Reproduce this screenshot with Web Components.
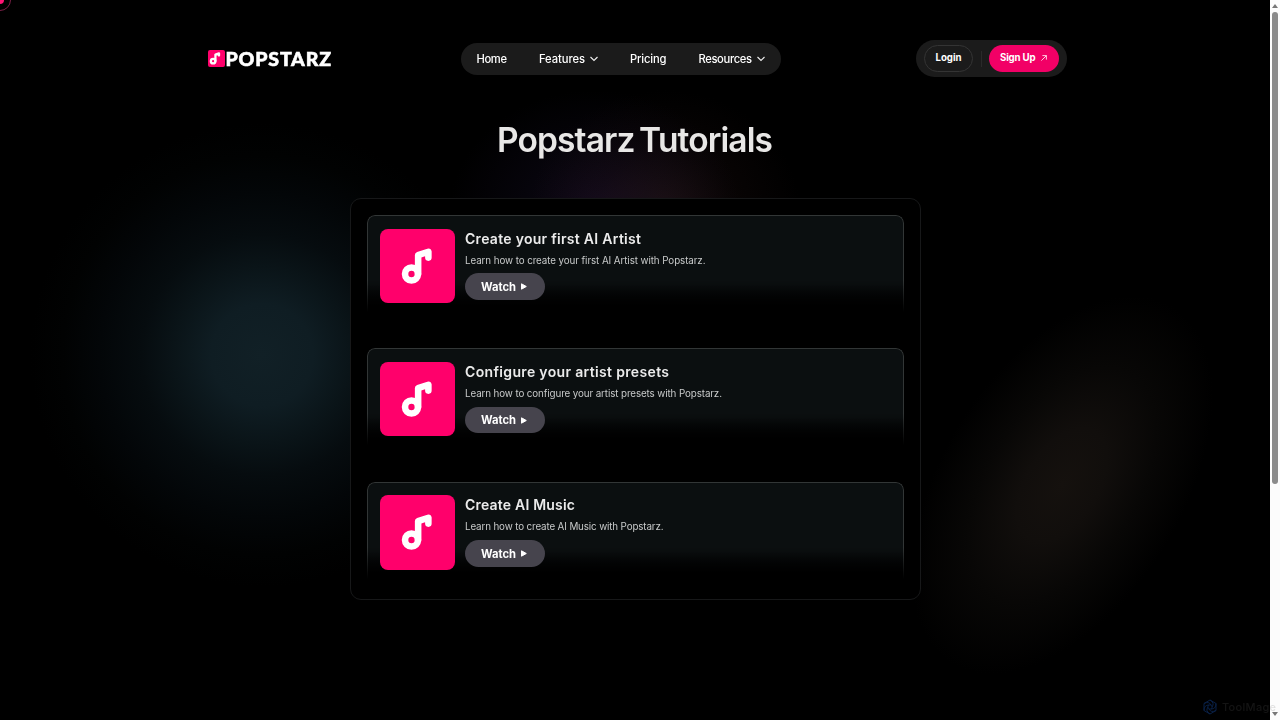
<!DOCTYPE html>
<html lang="en">
<head>
<meta charset="UTF-8">
<title>Popstarz Tutorials</title>
<style>
    :root {
        --pink: #ff006b;
        --pill: #1b1b1b;
    }
    * { box-sizing: border-box; }
    html, body { margin: 0; height: 100%; overflow: hidden; background: #000; }
    body { font-family: Inter, "Liberation Sans", sans-serif; color: #fff; }
</style>
</head>
<body>
<popstarz-page></popstarz-page>

<script>
// Text label that spreads its letters over a given width
class FitText extends HTMLElement {
    constructor() {
        super();
        this.attachShadow({ mode: 'open' });
        this.shadowRoot.innerHTML = `
            <style>
                :host { display: block; white-space: nowrap; flex: none; }
                span { display: inline-block; }
            </style>
            <span><slot></slot></span>
        `;
    }

    connectedCallback() {
        const width = parseFloat(this.getAttribute('width'));
        const label = this.shadowRoot.querySelector('span');
        this.style.width = width + 'px';
        const natural = label.getBoundingClientRect().width;
        const count = this.textContent.length;
        if (natural > 0) {
            label.style.letterSpacing = (width - natural) / (count - 1) + 'px';
        }
    }
}

class NoteIcon extends HTMLElement {
    constructor() {
        super();
        this.attachShadow({ mode: 'open' });
        this.shadowRoot.innerHTML = `
            <style>
                :host { display: block; flex: none; background: var(--pink); overflow: hidden; }
                svg { display: block; width: 100%; height: 100%; }
            </style>
            <svg viewBox="${this.getAttribute('box') || '0 0 75 75'}" fill="none" stroke="#fff" stroke-width="6.6" stroke-linecap="round" stroke-linejoin="round">
                <circle cx="31.7" cy="45.3" r="6.5"/>
                <path d="M38.4 45V26.3L48.7 22.9V28.8"/>
            </svg>
        `;
    }
}

class SiteNav extends HTMLElement {
    constructor() {
        super();
        this.attachShadow({ mode: 'open' });
        const chevron = '<svg width="8" height="6" viewBox="0 0 8 6" fill="none" stroke="#f0f0f0" stroke-width="1.1"><path d="M.5 1L4 4.5L7.5 1"/></svg>';
        this.shadowRoot.innerHTML = `
            <style>
                :host {
                    display: flex;
                    align-items: center;
                    gap: 32px;
                    width: 320px;
                    height: 32px;
                    padding: 0 16px 0 16px;
                    border-radius: 16px;
                    background: var(--pill);
                    font-size: 11.2px;
                    font-weight: 550;
                    line-height: 16px;
                }
                a { display: flex; align-items: center; gap: 5px; }
            </style>
            <a><fit-text width="30.5">Home</fit-text></a>
            <a><fit-text width="46">Features</fit-text>${chevron}</a>
            <a><fit-text width="36.5">Pricing</fit-text></a>
            <a><fit-text width="53.5">Resources</fit-text>${chevron}</a>
        `;
    }
}

class AccountActions extends HTMLElement {
    constructor() {
        super();
        this.attachShadow({ mode: 'open' });
        this.shadowRoot.innerHTML = `
            <style>
                * { box-sizing: border-box; }
                :host {
                    display: flex;
                    align-items: center;
                    gap: 7.5px;
                    width: 151px;
                    height: 37px;
                    padding: 0 8px;
                    box-sizing: border-box;
                    border-radius: 19px;
                    background: var(--pill);
                    font-size: 9.7px;
                    font-weight: 650;
                    line-height: 14px;
                }
                .login, .signup {
                    display: flex;
                    align-items: center;
                    justify-content: center;
                    height: 27px;
                    padding-bottom: 1px;
                    border-radius: 14px;
                }
                .login { width: 49px; border: 1px solid #343434; }
                .signup { width: 70px; gap: 5.5px; padding-right: 1px; background: #f20066; }
                i { width: 1px; height: 16px; background: #2a2a2a; }
            </style>
            <div class="login"><fit-text width="26">Login</fit-text></div>
            <i></i>
            <div class="signup">
                <fit-text width="35.5">Sign Up</fit-text>
                <svg width="6" height="6" viewBox="0 0 6 6" fill="none" stroke="#fff" stroke-width=".8"><path d="M.4 5.6L5.4 .6M1.4 .6H5.4V4.6"/></svg>
            </div>
        `;
    }
}

class SiteHeader extends HTMLElement {
    constructor() {
        super();
        this.attachShadow({ mode: 'open' });
        this.shadowRoot.innerHTML = `
            <style>
                :host { display: flex; align-items: center; height: 37px; }
                .logo {
                    display: flex;
                    align-items: center;
                    gap: .5px;
                    width: 124px;
                    font-family: Lato, sans-serif;
                    font-size: 19.5px;
                    font-weight: 900;
                    line-height: 20px;
                    -webkit-text-stroke: .6px #fff;
                }
                note-icon { width: 17px; height: 17px; border-radius: 2px; }
                site-nav { box-sizing: border-box; margin: 0 135.5px 0 128.5px; }
            </style>
            <div class="logo"><note-icon box="17 13 49 49"></note-icon><fit-text width="105.5">POPSTARZ</fit-text></div>
            <site-nav></site-nav>
            <account-actions></account-actions>
        `;
    }
}

class TutorialCard extends HTMLElement {
    constructor() {
        super();
        this.attachShadow({ mode: 'open' });
        this.shadowRoot.innerHTML = `
            <style>
                * { box-sizing: border-box; }
                :host {
                    display: flex;
                    flex: none;
                    position: relative;
                    box-sizing: border-box;
                    gap: 10.5px;
                    height: 107px;
                    padding: 13.5px;
                }
                /* frame and fill dissolve towards the bottom edge */
                .frame {
                    position: absolute;
                    inset: 0 0 8px;
                    border: 1px solid #323636;
                    border-bottom: 0;
                    border-radius: 8px 8px 0 0;
                    background: linear-gradient(#0b0f10 70%, #000 94%);
                    mask-image: linear-gradient(#000 66%, transparent 98%);
                }
                note-icon { position: relative; width: 74.5px; height: 74.5px; border-radius: 8px; }
                .info { position: relative; display: flex; flex-direction: column; align-items: flex-start; }
                .title { font-size: 14px; font-weight: 600; line-height: 20px; color: #ebebeb; }
                .text { margin-top: 4.2px; font-size: 9.8px; line-height: 16px; color: #c8caca; }
                .watch {
                    display: flex;
                    align-items: center;
                    gap: 5px;
                    width: 80px;
                    height: 26.5px;
                    margin-top: 4.8px;
                    padding-left: 16px;
                    border-radius: 14px;
                    background: #46444d;
                    font-size: 11.2px;
                    font-weight: 700;
                    line-height: 16px;
                }
            </style>
            <div class="frame"></div>
            <note-icon></note-icon>
            <div class="info">
                <div class="title"><slot name="title"></slot></div>
                <div class="text"><slot></slot></div>
                <div class="watch">
                    <fit-text width="35">Watch</fit-text>
                    <svg width="6" height="7" viewBox="0 0 6 7" fill="#fff" stroke="#fff" stroke-linejoin="round"><path d="M.5 .8V6.2L5.3 3.5Z"/></svg>
                </div>
            </div>
        `;
    }
}

class GlowBackdrop extends HTMLElement {
    constructor() {
        super();
        this.attachShadow({ mode: 'open' });
        this.shadowRoot.innerHTML = `
            <style>
                :host { position: absolute; inset: 0; overflow: hidden; }
                div { position: absolute; }
                .blue {
                    left: 30px; top: 123px; width: 464px; height: 464px;
                    background: radial-gradient(closest-side, #112026 0%, #0f1d23 22%, #0a1418 38%, #060c0f 52%, #030608 70%, #010202 86%, #000 100%);
                }
                .violet {
                    left: 450px; top: 90px; width: 290px; height: 240px;
                    background: radial-gradient(closest-side, #0e0818, #06040b 50%, transparent);
                }
                .rose {
                    left: 530px; top: 90px; width: 270px; height: 240px;
                    background: radial-gradient(closest-side, #150c0a, #080404 50%, transparent);
                    mix-blend-mode: screen;
                }
                .amber {
                    left: 942px; top: 275px; width: 240px; height: 420px;
                    transform: rotate(32deg);
                    background: radial-gradient(closest-side, #15110e 0%, #110e0c 30%, #080706 62%, transparent 100%);
                }
                .dot { left: -4px; top: -4px; width: 8px; height: 8px; border-radius: 50%; background: #ff1474; }
                .ring { left: -11px; top: -11px; width: 22px; height: 22px; box-sizing: border-box; border: 1px solid #7a1f46; border-radius: 50%; }
            </style>
            <div class="blue"></div><div class="violet"></div><div class="rose"></div>
            <div class="amber"></div><div class="dot"></div><div class="ring"></div>
        `;
    }
}

class PageScrollbar extends HTMLElement {
    constructor() {
        super();
        this.attachShadow({ mode: 'open' });
        this.shadowRoot.innerHTML = `
            <style>
                :host { display: flex; flex-direction: column; align-items: center; justify-content: space-between; width: 10px; height: 720px; padding: 4px 0; box-sizing: border-box; background: #fcfcfc; }
                .thumb { width: 6px; height: 472px; margin: 4px 0 auto; border-radius: 3px; background: #8b8b8b; }
                svg { display: block; }
            </style>
            <svg width="6" height="4" fill="#777"><path d="M0 4L3 0L6 4Z"/></svg>
            <div class="thumb"></div>
            <svg width="6" height="4" fill="#777"><path d="M0 0L3 4L6 0Z"/></svg>
        `;
    }
}

class ToolMark extends HTMLElement {
    constructor() {
        super();
        this.attachShadow({ mode: 'open' });
        this.shadowRoot.innerHTML = `
            <style>
                :host { position: absolute; right: 4px; bottom: 5px; display: flex; align-items: center; gap: 4px; font-size: 11px; font-weight: 500; line-height: 16px; color: rgba(105,105,105,.19); }
            </style>
            <svg width="16" height="16" viewBox="-8 -8 16 16" fill="none" stroke="#092047" stroke-width="1">
                <path d="M0-7L6-3.5V3.5L0 7L-6 3.5V-3.5Z"/>
                <circle r="2.2"/>
                <path d="M0-7Q5-4 2 0M6-3.5Q6 2 1 2M6 3.5Q1 6-1 2M0 7Q-5 4-2 0M-6 3.5Q-6-2-1-2M-6-3.5Q-1-6 1-2"/>
            </svg>
            <fit-text width="54">ToolMage</fit-text>
        `;
    }
}

class PopstarzPage extends HTMLElement {
    constructor() {
        super();
        this.attachShadow({ mode: 'open' });
        this.shadowRoot.innerHTML = `
            <style>
                * { box-sizing: border-box; }
                :host { display: flex; position: relative; width: 1280px; height: 720px; overflow: hidden; }
                main { position: relative; display: flex; flex-direction: column; width: 1270px; padding-top: 40px; }
                site-header { margin-left: 208px; }
                h1 { margin: 42px 0 0 497px; font-size: 33.5px; font-weight: 600; line-height: 42px; word-spacing: -3px; color: #e8e7e6; }
                .panel {
                    display: flex;
                    flex-direction: column;
                    gap: 26.4px;
                    width: 571px;
                    height: 402px;
                    margin: 37px 0 0 350px;
                    padding: 16px 16px 16px 15.5px;
                    border: 1px solid #171819;
                    border-radius: 11px;
                    background: #000;
                }
            </style>
            <glow-backdrop></glow-backdrop>
            <main>
                <site-header></site-header>
                <h1><fit-text width="276">Popstarz Tutorials</fit-text></h1>
                <section class="panel">
                    <tutorial-card>
                        <fit-text slot="title" width="176">Create your first AI Artist</fit-text>
                        <fit-text width="240.5">Learn how to create your first AI Artist with Popstarz.</fit-text>
                    </tutorial-card>
                    <tutorial-card>
                        <fit-text slot="title" width="204">Configure your artist presets</fit-text>
                        <fit-text width="257">Learn how to configure your artist presets with Popstarz.</fit-text>
                    </tutorial-card>
                    <tutorial-card>
                        <fit-text slot="title" width="110">Create AI Music</fit-text>
                        <fit-text width="198.5">Learn how to create AI Music with Popstarz.</fit-text>
                    </tutorial-card>
                </section>
            </main>
            <page-scrollbar></page-scrollbar>
            <tool-mark></tool-mark>
        `;
    }
}

// Containers first, so labels are measured once their surroundings have styles
customElements.define('site-nav', SiteNav);
customElements.define('account-actions', AccountActions);
customElements.define('note-icon', NoteIcon);
customElements.define('site-header', SiteHeader);
customElements.define('tutorial-card', TutorialCard);
customElements.define('glow-backdrop', GlowBackdrop);
customElements.define('page-scrollbar', PageScrollbar);
customElements.define('tool-mark', ToolMark);
customElements.define('popstarz-page', PopstarzPage);
customElements.define('fit-text', FitText);
</script>
</body>
</html>
